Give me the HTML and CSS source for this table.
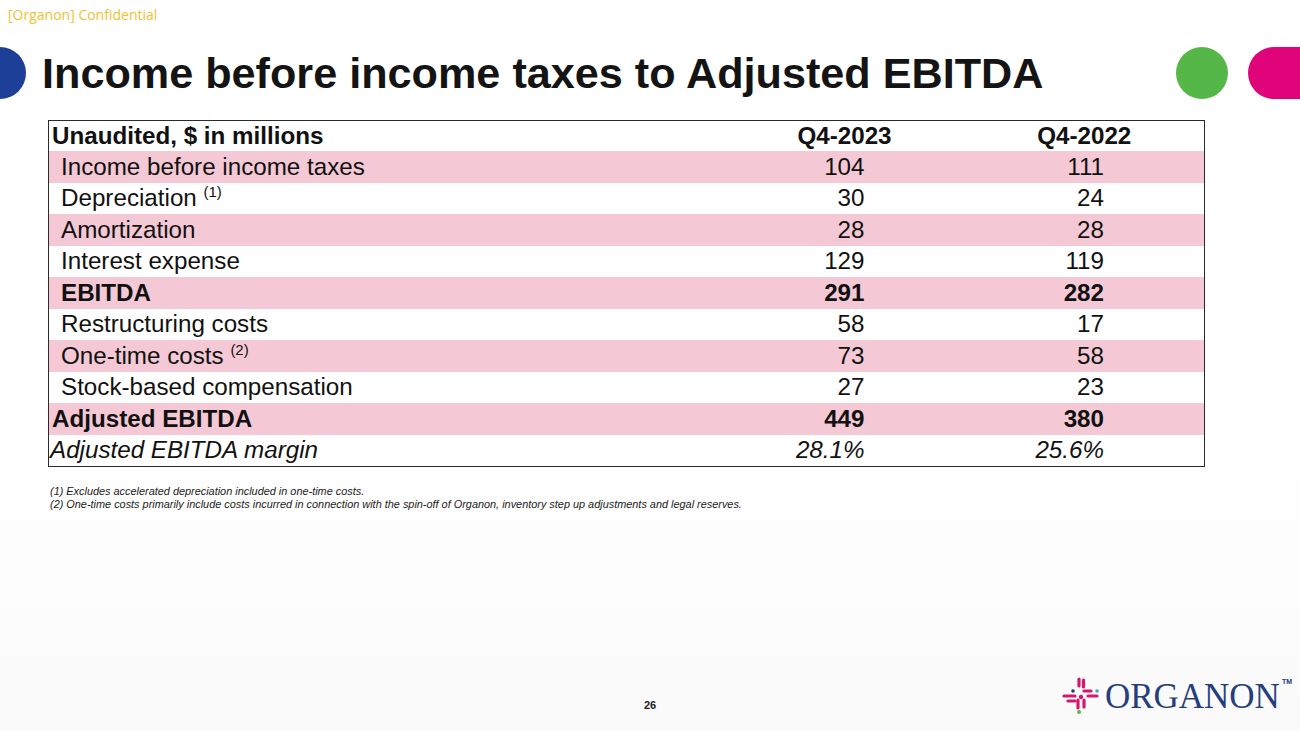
FILE: index.html
```html
<!DOCTYPE html>
<html lang="en">
<head>
<meta charset="utf-8">
<title>Income before income taxes to Adjusted EBITDA</title>
<link rel="stylesheet" href="styles.css">
</head>
<body>
<div class="slide">
  <div class="conf">[Organon] Confidential</div>
  <div class="titlebar">
    <span class="dot-blue"></span>
    <h1>Income before income taxes to Adjusted EBITDA</h1>
    <span class="dot-green"></span>
    <span class="pill-pink"></span>
  </div>
  <table class="fin">
    <colgroup><col class="c-label"><col class="c-val"><col class="c-val"></colgroup>
    <thead>
      <tr class="head"><th class="lbl">Unaudited, $ in millions</th><th class="h1">Q4-2023</th><th class="h2">Q4-2022</th></tr>
    </thead>
    <tbody>
      <tr class="pink"><td class="ind">Income before income taxes</td><td>104</td><td>111</td></tr>
      <tr><td class="ind">Depreciation <sup>(1)</sup></td><td>30</td><td>24</td></tr>
      <tr class="pink"><td class="ind">Amortization</td><td>28</td><td>28</td></tr>
      <tr><td class="ind">Interest expense</td><td>129</td><td>119</td></tr>
      <tr class="pink bold"><td class="ind">EBITDA</td><td>291</td><td>282</td></tr>
      <tr><td class="ind">Restructuring costs</td><td>58</td><td>17</td></tr>
      <tr class="pink"><td class="ind">One-time costs <sup>(2)</sup></td><td>73</td><td>58</td></tr>
      <tr><td class="ind">Stock-based compensation</td><td>27</td><td>23</td></tr>
      <tr class="pink bold"><td class="flush">Adjusted EBITDA</td><td>449</td><td>380</td></tr>
      <tr class="ital"><td class="flush2">Adjusted EBITDA margin</td><td>28.1%</td><td>25.6%</td></tr>
    </tbody>
  </table>
  <div class="notes">
    <p>(1) Excludes accelerated depreciation included in one-time costs.</p>
    <p>(2) One-time costs primarily include costs incurred in connection with the spin-off of Organon, inventory step up adjustments and legal reserves.</p>
  </div>
  <footer class="foot">
    <span></span>
    <span class="page">26</span>
    <div class="logo">
      <svg class="mark" width="40" height="42" viewBox="0 0 40 42" aria-hidden="true">
        <g stroke="#d6176d" stroke-width="3.2" stroke-linecap="round" fill="none">
          <line x1="20" y1="3" x2="20" y2="10"/>
          <line x1="24.5" y1="4" x2="24.5" y2="11"/>
          <line x1="25" y1="15" x2="32" y2="15"/>
          <line x1="5" y1="20" x2="16" y2="20"/>
          <line x1="29" y1="20" x2="38" y2="20"/>
          <line x1="9" y1="25" x2="16" y2="25"/>
          <line x1="19" y1="24" x2="19" y2="32"/>
          <line x1="25" y1="24" x2="25" y2="31"/>
        </g>
        <circle cx="22" cy="21" r="2.2" fill="#d6176d"/>
        <circle cx="14" cy="15" r="1.8" fill="#233b7d"/>
        <circle cx="38" cy="15" r="1.8" fill="#36a9d6"/>
        <circle cx="20" cy="36" r="2" fill="#5bb847"/>
      </svg>
      <span class="word">ORGANON</span><span class="tm">TM</span>
    </div>
  </footer>
</div>
</body>
</html>
```
FILE: styles.css
```css
html, body {
  margin: 0;
  padding: 0;
  background: #ffffff;
}

.slide {
  width: 1300px;
  height: 731px;
  display: flex;
  flex-direction: column;
  background: linear-gradient(#ffffff 0%, #ffffff 60%, #fafafa 100%);
  font-family: "Liberation Sans", Arial, sans-serif;
  color: #111;
  overflow: hidden;
}

.conf {
  height: 47px;
  box-sizing: border-box;
  padding: 6px 0 0 8px;
  font-family: "Open Sans", "Liberation Sans", sans-serif;
  font-size: 14px;
  line-height: 18px;
  color: #f0c132;
}

.titlebar {
  height: 52px;
  display: flex;
  align-items: center;
}

.dot-blue {
  width: 26px;
  height: 52px;
  border-radius: 0 26px 26px 0;
  background: #1d3f98;
  flex: none;
}

.titlebar h1 {
  margin: 0 0 0 16px;
  font-size: 43.2px;
  line-height: 52px;
  font-weight: bold;
  color: #141414;
  white-space: nowrap;
}

.dot-green {
  margin-left: auto;
  width: 52px;
  height: 52px;
  border-radius: 50%;
  background: #55b748;
  flex: none;
}

.pill-pink {
  margin-left: 20px;
  width: 52px;
  height: 52px;
  border-radius: 26px 0 0 26px;
  background: #e0047b;
  flex: none;
}

.fin {
  margin: 21px 0 0 48px;
  width: 1156px;
  border-collapse: collapse;
  border: 1px solid #2a2a2a;
  table-layout: fixed;
  font-size: 24.2px;
}

.c-label { width: 668px; }
.c-val { width: 244px; }

.fin th, .fin td {
  padding: 0;
  white-space: nowrap;
  line-height: 28px;
}

.fin .head th {
  height: 30px;
  font-weight: bold;
  text-align: center;
  vertical-align: middle;
}

.fin .head th.lbl {
  text-align: left;
  padding-left: 3px;
}

.fin .head th.h1 { padding-left: 12px; }
.fin .head th.h2 { padding-left: 4px; }

.fin tbody td {
  height: 31.5px;
  vertical-align: middle;
  text-align: right;
}

.fin tbody td:nth-child(2) { padding-right: 96px; }
.fin tbody td:nth-child(3) { padding-right: 100px; }

.fin tbody td.ind { text-align: left; padding-left: 12px; }
.fin tbody td.flush { text-align: left; padding-left: 3px; }
.fin tbody td.flush2 { text-align: left; padding-left: 1px; }

.fin tr.pink { background: #f4c9d5; }
.fin tr.bold td { font-weight: bold; }
.fin tr.ital td { font-style: italic; }

.fin sup {
  font-size: 15px;
  vertical-align: 9px;
  line-height: 0;
}

.notes {
  margin: 18px 0 0 50px;
  font-size: 10.9px;
  line-height: 13px;
  font-style: italic;
  color: #222;
}

.notes p { margin: 0; }

.foot {
  margin-top: auto;
  height: 56px;
  display: grid;
  grid-template-columns: 1fr auto 1fr;
  align-items: center;
  padding-bottom: 6px;
}

.page {
  font-size: 11px;
  font-weight: bold;
  color: #222;
  padding-top: 16px;
}

.logo {
  justify-self: end;
  display: flex;
  align-items: center;
  margin-right: 8px;
}

.mark {
  flex: none;
  margin-right: 6px;
}

.word {
  font-family: "Liberation Serif", "Times New Roman", serif;
  font-size: 35px;
  letter-spacing: 0px;
  color: #253f7e;
  line-height: 40px;
}

.tm {
  align-self: flex-start;
  font-size: 7px;
  font-weight: bold;
  color: #213a7a;
  margin-left: 2px;
  margin-top: 2px;
}
```
